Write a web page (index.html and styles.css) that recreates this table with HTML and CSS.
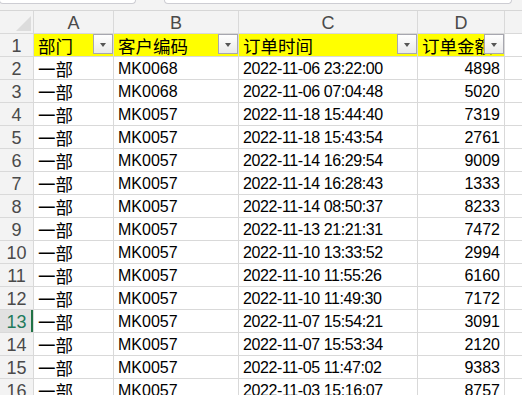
FILE: index.html
```html
<!DOCTYPE html>
<html lang="zh">
<head>
<meta charset="utf-8">
<link rel="stylesheet" href="styles.css">
</head>
<body>
<div class="topbar">
  <div class="box box1"></div>
  <div class="box box2"></div>
</div>
<div class="sheet">
  <div class="corner"></div>
  <div class="colh">A</div><div class="colh">B</div><div class="colh">C</div><div class="colh">D</div><div class="colh"></div>

  <div class="rowh">1</div>
  <div class="cell head"><span class="zh">部门</span><span class="filter"></span></div>
  <div class="cell head"><span class="zh">客户编码</span><span class="filter"></span></div>
  <div class="cell head"><span class="zh">订单时间</span><span class="filter"></span></div>
  <div class="cell head"><span class="zh">订单金额</span><span class="filter"></span></div>
  <div class="cell"></div>

  <div class="rowh">2</div><div class="cell"><span class="zh">一部</span></div><div class="cell">MK0068</div><div class="cell date">2022-11-06 23:22:00</div><div class="cell num">4898</div><div class="cell"></div>
  <div class="rowh">3</div><div class="cell"><span class="zh">一部</span></div><div class="cell">MK0068</div><div class="cell date">2022-11-06 07:04:48</div><div class="cell num">5020</div><div class="cell"></div>
  <div class="rowh">4</div><div class="cell"><span class="zh">一部</span></div><div class="cell">MK0057</div><div class="cell date">2022-11-18 15:44:40</div><div class="cell num">7319</div><div class="cell"></div>
  <div class="rowh">5</div><div class="cell"><span class="zh">一部</span></div><div class="cell">MK0057</div><div class="cell date">2022-11-18 15:43:54</div><div class="cell num">2761</div><div class="cell"></div>
  <div class="rowh">6</div><div class="cell"><span class="zh">一部</span></div><div class="cell">MK0057</div><div class="cell date">2022-11-14 16:29:54</div><div class="cell num">9009</div><div class="cell"></div>
  <div class="rowh">7</div><div class="cell"><span class="zh">一部</span></div><div class="cell">MK0057</div><div class="cell date">2022-11-14 16:28:43</div><div class="cell num">1333</div><div class="cell"></div>
  <div class="rowh">8</div><div class="cell"><span class="zh">一部</span></div><div class="cell">MK0057</div><div class="cell date">2022-11-14 08:50:37</div><div class="cell num">8233</div><div class="cell"></div>
  <div class="rowh">9</div><div class="cell"><span class="zh">一部</span></div><div class="cell">MK0057</div><div class="cell date">2022-11-13 21:21:31</div><div class="cell num">7472</div><div class="cell"></div>
  <div class="rowh">10</div><div class="cell"><span class="zh">一部</span></div><div class="cell">MK0057</div><div class="cell date">2022-11-10 13:33:52</div><div class="cell num">2994</div><div class="cell"></div>
  <div class="rowh">11</div><div class="cell"><span class="zh">一部</span></div><div class="cell">MK0057</div><div class="cell date">2022-11-10 11:55:26</div><div class="cell num">6160</div><div class="cell"></div>
  <div class="rowh">12</div><div class="cell"><span class="zh">一部</span></div><div class="cell">MK0057</div><div class="cell date">2022-11-10 11:49:30</div><div class="cell num">7172</div><div class="cell"></div>
  <div class="rowh sel">13</div><div class="cell"><span class="zh">一部</span></div><div class="cell">MK0057</div><div class="cell date">2022-11-07 15:54:21</div><div class="cell num">3091</div><div class="cell"></div>
  <div class="rowh">14</div><div class="cell"><span class="zh">一部</span></div><div class="cell">MK0057</div><div class="cell date">2022-11-07 15:53:34</div><div class="cell num">2120</div><div class="cell"></div>
  <div class="rowh">15</div><div class="cell"><span class="zh">一部</span></div><div class="cell">MK0057</div><div class="cell date">2022-11-05 11:47:02</div><div class="cell num">9383</div><div class="cell"></div>
  <div class="rowh">16</div><div class="cell"><span class="zh">一部</span></div><div class="cell">MK0057</div><div class="cell date">2022-11-03 15:16:07</div><div class="cell num">8757</div><div class="cell"></div>
</div>
</body>
</html>
```

FILE: styles.css
```css
html, body {
  margin: 0;
  padding: 0;
  width: 522px;
  height: 395px;
  overflow: hidden;
  background: #ffffff;
  font-family: "Liberation Sans", "Noto Sans CJK SC", sans-serif;
}

.topbar {
  height: 10px;
  background: #f3f3f3;
  border-bottom: 1px solid #d6d6d6;
  display: flex;
  align-items: flex-start;
  gap: 28px;
}

.box {
  height: 3px;
  background: #ffffff;
  border: 1px solid #cdcdd3;
  border-top: none;
  border-radius: 0 0 5px 5px;
}

.box1 {
  width: 135px;
  margin-left: -1px;
}

.box2 {
  width: 346px;
}

.sheet {
  display: grid;
  grid-template-columns: 33px 79px 124px 178px 86px 1fr;
  grid-auto-rows: 22px;
  gap: 1px;
  background: #d9d9d9;
}

.corner {
  background: #f3f3f3;
  position: relative;
}

.corner::after {
  content: "";
  position: absolute;
  right: 2px;
  bottom: 2px;
  width: 0;
  height: 0;
  border-left: 15px solid transparent;
  border-bottom: 15px solid #dcdcdc;
}

.colh {
  background: #f3f3f3;
  color: #4a4a4a;
  font-size: 18px;
  line-height: 20px;
  padding-top: 2px;
  box-sizing: border-box;
  text-align: center;
}

.rowh {
  background: #f3f3f3;
  color: #4a4a4a;
  font-size: 18px;
  line-height: 20px;
  padding-top: 2px;
  box-sizing: border-box;
  text-align: center;
  position: relative;
}

.rowh.sel {
  background: #e1e1e1;
  color: #217a5c;
}

.rowh.sel::after {
  content: "";
  position: absolute;
  right: 0;
  top: 0;
  bottom: 0;
  width: 2px;
  background: #217346;
}

.cell {
  background: #ffffff;
  color: #000000;
  font-size: 16px;
  line-height: 20px;
  padding: 2px 4px 0 4px;
  box-sizing: border-box;
  white-space: nowrap;
  position: relative;
}

.cell.head {
  background: #ffff00;
}

.zh {
  font-family: "Noto Sans CJK SC", sans-serif;
  font-size: 17.5px;
  line-height: 20px;
}

.date {
  letter-spacing: -0.4px;
}

.num {
  text-align: right;
  padding-right: 4px;
}

.filter {
  position: absolute;
  top: 0;
  right: 0;
  width: 20px;
  height: 20px;
  box-sizing: border-box;
  border: 1px solid #a7a7af;
  background: linear-gradient(#ffffff, #e9e9e9);
}

.filter::after {
  content: "";
  position: absolute;
  left: 6px;
  top: 8px;
  width: 0;
  height: 0;
  border-left: 3.5px solid transparent;
  border-right: 3.5px solid transparent;
  border-top: 4px solid #555555;
}
```
